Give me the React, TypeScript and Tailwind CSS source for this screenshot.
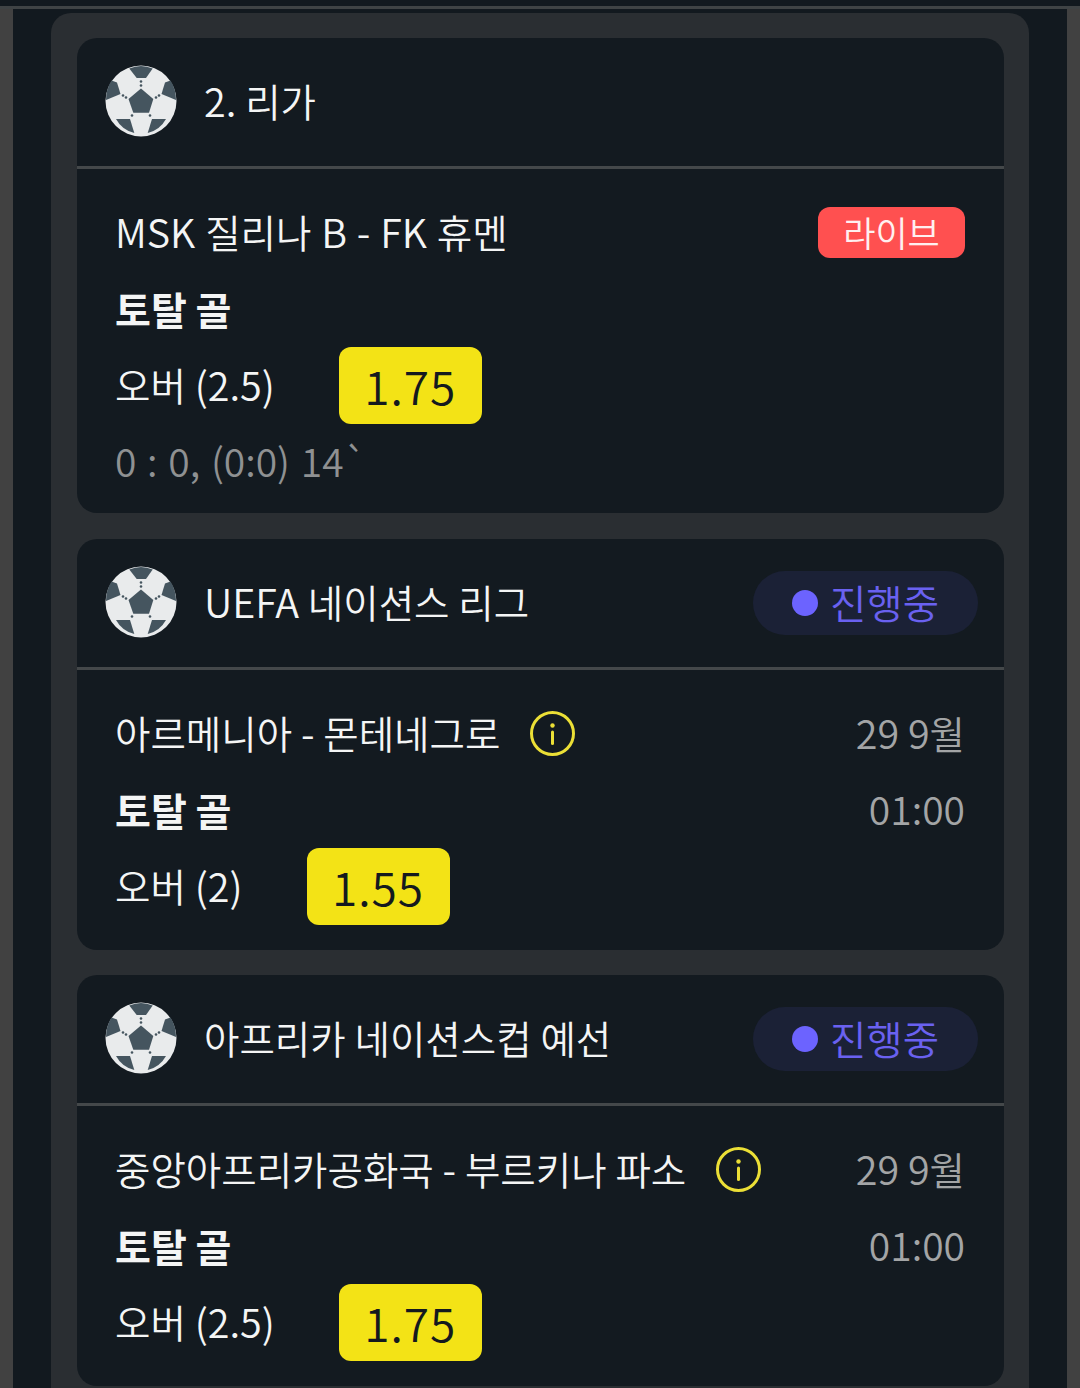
import React from "react";

// Korean runs sit a little smaller than the latin/digit runs in this font
function Mixed({ text }: { text: string }) {
  return (
    <>
      {text.split(/([가-힣]+)/).map((part, index) =>
        /[가-힣]/.test(part) ? (
          <span key={index} className="text-[38.5px]">
            {part}
          </span>
        ) : (
          <span key={index} className="text-[39.5px]">
            {part}
          </span>
        ),
      )}
    </>
  );
}

function Ball() {
  return (
    <svg viewBox="0 0 72 72" className="w-[72px] h-[72px] shrink-0 -mt-[1px]">
      <circle cx="36" cy="36" r="35.5" fill="#e9ebec" />
      <g fill="#45555f">
        <path d="M36 23.5 48.3 34 44 47.7H28.3L23.5 34Z" />
        <path d="M24.3 3.5Q36 -1.5 47.7 3.5L41 13H31.7Z" />
        <path d="M6.5 15.5 12 17.5 15.5 29 1 35Q1 24 6.5 15.5Z" />
        <path d="M65.5 15.5 60 17.5 56.5 29 71 35Q71 24 65.5 15.5Z" />
        <path d="M11 54H25L29.3 68Q17 65 11 54Z" />
        <path d="M61 54H47L42.7 68Q55 65 61 54Z" />
        <circle cx="36" cy="16.5" r="1.3" />
        <circle cx="36" cy="20.5" r="1.3" />
        <circle cx="18" cy="30.5" r="1.3" />
        <circle cx="21" cy="32.5" r="1.3" />
        <circle cx="54" cy="30.5" r="1.3" />
        <circle cx="51" cy="32.5" r="1.3" />
        <circle cx="27" cy="50.5" r="1.3" />
        <circle cx="45" cy="50.5" r="1.3" />
      </g>
    </svg>
  );
}

function InfoIcon() {
  return (
    <svg viewBox="0 0 45 45" className="w-[45px] h-[45px] ml-[30px] shrink-0 text-[#ebdf36]">
      <circle cx="22.5" cy="22.5" r="21" fill="none" stroke="currentColor" strokeWidth="3" />
      <circle cx="22.5" cy="14.5" r="2.2" fill="currentColor" />
      <path d="M22.5 21V32.5" stroke="currentColor" strokeWidth="3" strokeLinecap="round" fill="none" />
    </svg>
  );
}

function OddsButton({ value }: { value: string }) {
  return (
    <div className="flex items-center justify-center w-[143px] h-[77px] rounded-xl bg-[#f3e316] text-[#14191e] text-[46px] tracking-[1px]">
      {value}
    </div>
  );
}

function LiveBadge() {
  return (
    <span className="flex items-center justify-center w-[147px] h-[51px] rounded-xl bg-[#ff5050] text-[#fff0f0] text-[35px]">
      라이브
    </span>
  );
}

function ProgressBadge() {
  return (
    <div className="flex items-center gap-[12px] w-[225px] h-[64px] pl-[39px] rounded-full bg-[#1b2136] text-[#6a61f0] text-[39.5px]">
      <span className="w-[26px] h-[26px] rounded-full bg-[#6c63ff]" />
      <span className="-mt-[2px]">진행중</span>
    </div>
  );
}

type MatchCardProps = {
  league: string;
  status?: boolean;
  match: string;
  live?: boolean;
  over: string;
  odds: string;
  score?: string;
  className?: string;
};

function MatchCard({ league, status, match, live, over, odds, score, className }: MatchCardProps) {
  return (
    <div className={`rounded-[20px] bg-[#131a20] ${className ?? ""}`}>
      <div className="flex items-center h-[127px] pb-[1px] pl-[28px] pr-[26px] border-b-[3px] border-[#44484a] box-content">
        <Ball />
        <span className="ml-[27px] flex-1 -mt-[3px] text-[#f4f5f5]">
          <Mixed text={league} />
        </span>
        {status && <ProgressBadge />}
      </div>
      <div className={`pl-[38px] pr-[39px] pt-[25px] ${score ? "pb-[13px]" : "pb-[26px]"}`}>
        <div className="flex items-center justify-between h-[76px]">
          <div className="flex items-center">
            <span className={`-mt-[2px] text-[#f4f5f5] ${live ? "[word-spacing:1px]" : ""}`}>
              <Mixed text={match} />
            </span>
            {!live && <InfoIcon />}
          </div>
          {live ? (
            <LiveBadge />
          ) : (
            <span className="-mt-[3px] text-[#a3a5a6]">
              <Mixed text="29 9월" />
            </span>
          )}
        </div>
        <div className="flex items-center justify-between h-[77px]">
          <span className="-mt-[1px] text-[39px] font-bold text-[#f4f5f5]">토탈 골</span>
          {!live && <span className="-mt-[3px] text-[39px] text-[#a3a5a6]">01:00</span>}
        </div>
        <div className="flex items-center gap-[64px] h-[76px]">
          <span className="-mt-[3px] text-[#f4f5f5]">
            <Mixed text={over} />
          </span>
          <OddsButton value={odds} />
        </div>
        {score && (
          <div className="flex items-center h-[77px] text-[39px] [word-spacing:2px] text-[#8f9192]">
            <span className="-mt-[2px]">{score}</span>
          </div>
        )}
      </div>
    </div>
  );
}

export default function App() {
  return (
    <div className="h-[1388px] overflow-hidden bg-[#414141] font-['Noto_Sans_CJK_KR',sans-serif] font-[350]">
      <div className="h-[6px] bg-[#12191f]" />
      <div className="h-[3px] bg-[#3f4345]" />
      <div className="mx-[13px] h-full bg-[#12191f] px-[38px] pt-[4px]">
        <div className="flex flex-col gap-[26px] rounded-t-[20px] bg-[#2a2e32] pl-[26px] pr-[25px] pt-[25px] pb-[26px]">
          <MatchCard league="2. 리가" match="MSK 질리나 B - FK 휴멘" live over="오버 (2.5)" odds="1.75" score="0 : 0, (0:0) 14`" />
          <MatchCard league="UEFA 네이션스 리그" status match="아르메니아 - 몬테네그로" over="오버 (2)" odds="1.55" />
          <MatchCard className="-mt-[1px]" league="아프리카 네이션스컵 예선" status match="중앙아프리카공화국 - 부르키나 파소" over="오버 (2.5)" odds="1.75" />
        </div>
      </div>
    </div>
  );
}
